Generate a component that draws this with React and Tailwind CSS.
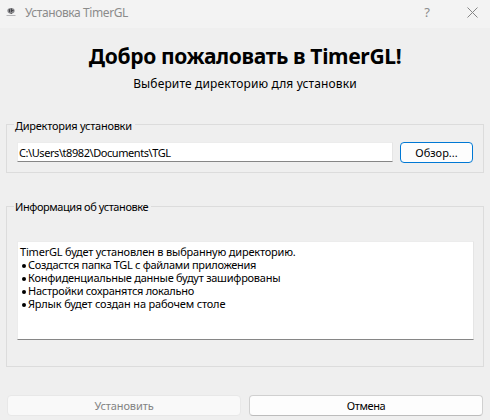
const notes = [
  { text: 'Создастся папка TGL с файлами приложения', style: 'tracking-[-0.31px]' },
  { text: 'Конфиденциальные данные будут зашифрованы', style: 'tracking-[-0.25px]' },
  { text: 'Настройки сохранятся локально', style: 'tracking-[-0.26px]' },
  { text: 'Ярлык будет создан на рабочем столе', style: 'tracking-[-0.18px]' },
];

function AppIcon() {
  return (
    <svg className="ml-[6px] mt-[6px] h-[12px] w-[10px] shrink-0" viewBox="0 0 10 12">
      <ellipse cx="5" cy="4.8" rx="3.6" ry="2.8" fill="#88888c" />
      <path d="M3.5 3.2v3M5.5 2.5v3.5M5.5 4.5h2" stroke="#46464b" strokeWidth="1" fill="none" />
      <path d="M4.5 7.5h1.5" stroke="#666" strokeWidth="1" />
      <path d="M.5 9.5h9" stroke="#b5b5b8" strokeWidth="1" />
    </svg>
  );
}

function Group({ title, titleClass, className, children }) {
  return (
    <section className={`relative mx-[6px] w-[478px] border border-[#dcdcdc] ${className}`}>
      <h2 className={`absolute left-[7px] h-[15px] whitespace-nowrap bg-[#efefef] pl-px text-[11px] leading-[15px] ${titleClass}`}>
        {title}
      </h2>
      {children}
    </section>
  );
}

export default function App() {
  return (
    <div className="flex h-[420px] w-[490px] flex-col overflow-hidden bg-[#efefef] font-['Noto_Sans','Open_Sans',sans-serif] text-black">
      <header className="flex h-[28px] shrink-0 bg-[#f3f3f3] text-[#8b8b8b]">
        <AppIcon />
        <span className="ml-[9px] mt-[4px] whitespace-nowrap text-[12px] leading-[18px] tracking-[-0.4px]">Установка TimerGL</span>
        <span className="ml-auto mr-[37px] mt-[3px] text-[13px] leading-[18px]">?</span>
        <svg className="mr-[12px] mt-[7px] h-[11px] w-[11px]" viewBox="0 0 11 11">
          <path d="M.5.5l10 10M10.5.5l-10 10" stroke="#858585" strokeWidth="1" />
        </svg>
      </header>
      <h1 className="mt-[13px] h-[30px] shrink-0 whitespace-nowrap text-center text-[21px] font-bold leading-[30px] tracking-[-0.35px]">Добро пожаловать в TimerGL!</h1>
      <p className="mt-[4px] h-[18px] shrink-0 whitespace-nowrap text-center text-[12px] leading-[18px] tracking-[0.13px]">Выберите директорию для установки</p>
      <Group title="Директория установки" titleClass="-top-[7px] w-[121px] tracking-[-0.25px]" className="mt-[31px] flex h-[49px] shrink-0 pl-[10px] pt-[17px]">
        <input
          className="h-[20px] w-[376px] border border-b-[#868686] border-l-[#ececec] border-r-[#e5e5e5] border-t-[#ececec] bg-white pl-px text-[11px] leading-[18px] tracking-[-0.43px] outline-none"
          defaultValue="C:\Users\t8982\Documents\TGL"
        />
        <button className="ml-[7px] h-[21px] w-[73px] rounded-[4px] border border-[#0078d4] bg-[#fdfdfd] text-[11px] leading-[18px]">Обзор...</button>
      </Group>
      <Group title="Информация об установке" titleClass="-top-[8px] w-[137px] tracking-[-0.42px]" className="mt-[33px] h-[161px] shrink-0 pl-[10px] pt-[34px]">
        <div className="h-[99px] w-[457px] border border-b-[#868686] border-l-[#ececec] border-r-[#e5e5e5] border-t-[#ececec] bg-white pl-[2px] pt-[3px] text-[11px] leading-[13px]">
          <p className="whitespace-nowrap tracking-[-0.19px]">TimerGL будет установлен в выбранную директорию.</p>
          {notes.map((note) => (
            <p key={note.text} className="flex h-[13px] items-center whitespace-nowrap">
              <span className="ml-[2px] mr-[2px] mt-[2px] h-[4px] w-[4px] rounded-full bg-black" />
              <span className={note.style}>{note.text}</span>
            </p>
          ))}
        </div>
      </Group>
      <footer className="mt-[28px] flex gap-[8px] pl-[7px] text-[11px] leading-[18px]">
        <button className="h-[21px] w-[234px] rounded-[4px] border border-[#e8e8e8] bg-[#f9f9f9] tracking-[-0.1px] text-[#838383]" disabled>Установить</button>
        <button className="h-[21px] w-[234px] rounded-[4px] border border-[#d0d0d0] border-b-[#bcbcbc] bg-[#fdfdfd] tracking-[-0.4px]">Отмена</button>
      </footer>
    </div>
  );
}
